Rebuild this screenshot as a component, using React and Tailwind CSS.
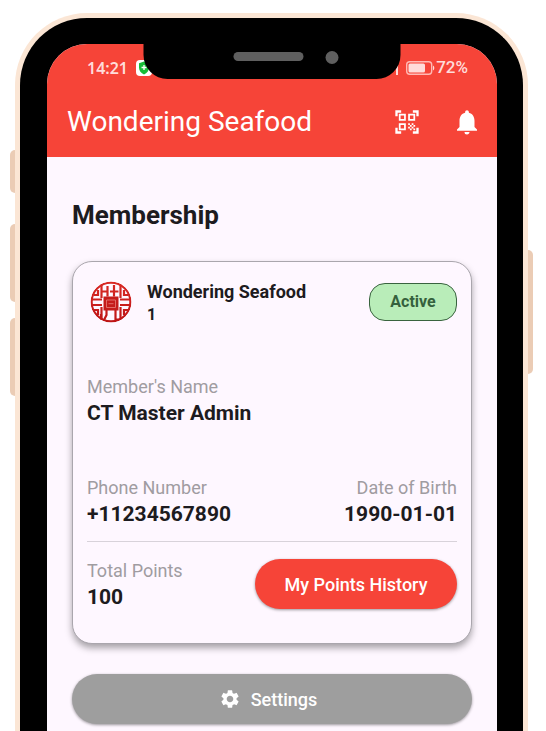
import React from "react";
import { MdNotifications, MdQrCodeScanner, MdSettings } from "react-icons/md";

function SealLogo() {
  return (
    <svg viewBox="0 0 42 42" className="h-[42px] w-[42px] shrink-0" role="img" aria-label="Wondering Seafood logo">
      <defs>
        <clipPath id="seal-disc">
          <circle cx="21" cy="21" r="20.5" />
        </clipPath>
        <linearGradient id="seal-red" x1="0" y1="0" x2="0" y2="42" gradientUnits="userSpaceOnUse">
          <stop offset="0" stopColor="#d92a25" />
          <stop offset="1" stopColor="#bd1415" />
        </linearGradient>
      </defs>
      <g clipPath="url(#seal-disc)" fill="none" stroke="url(#seal-red)" strokeWidth="2.2">
        <circle cx="21" cy="21" r="19.400" />
        <path d="M11.500 3v14M30.500 3v14M11.500 26v13M30.500 26v13" />
        <path d="M17.500 5v10.500M24 4v11.500M12 10.500h5M20 10.500h8.500" />
        <path d="M1 18.500h11M1 24h11M30 18.500h11M30 24h11" />
        <path d="M8 9v5H3.500M34 9v5h4.500" />
        <path d="M8 34v-5H3.500M34 34v-5h4.500" />
        <path d="M16.500 29v5l-2.500 5M25.500 29v9.500h4M11 33v6" />
      </g>
      <path fill="#c51b1b" d="M13.500 15.500h15v14h-15z" />
      <path d="M16.500 19h9v7.500h-9zM18.500 22.700h5" fill="none" stroke="#e8807b" strokeWidth=".8" />
    </svg>
  );
}

function StatusBar() {
  return (
    <div className="relative flex h-[47px] items-center justify-between pr-[29px] pl-10 font-['Noto_Sans','Open_Sans',sans-serif] text-base font-semibold text-[#ffdcda]">
      <div className="flex items-center gap-2">
        <span>14:21</span>
        <svg viewBox="0 0 16 16" className="h-4 w-4" aria-hidden="true">
          <rect width="16" height="16" rx="4" fill="#fff" />
          <path d="M8 1.500l5 1.800v4.500c0 3-2 5.200-5 6.700-3-1.500-5-3.700-5-6.700V3.300z" fill="#16bd38" />
          <path d="M8 5v5M5.500 7.500h5" stroke="#fff" strokeWidth="1.300" />
        </svg>
      </div>
      <div className="flex items-center gap-px">
        <svg viewBox="0 0 42 16" className="h-4 w-[42px]" aria-hidden="true">
          <path d="M3 15V5l2-2v12z" fill="#ffdcda" />
          <rect x="13.700" y="1.700" width="25" height="12.600" rx="3" fill="none" stroke="#ffb9b4" strokeWidth="1.400" />
          <rect x="15.500" y="3.500" width="16.500" height="9" rx="1.500" fill="#ffdcda" />
          <path d="M40 5.500a3 3 0 0 1 0 5z" fill="#ffdcda" />
        </svg>
        <span className="font-[Roboto,sans-serif] text-[17px] font-medium">72%</span>
      </div>
      <div className="absolute top-0 left-1/2 flex h-[35px] w-[257px] -translate-x-1/2 rounded-b-[24px] bg-black pt-[7px] pl-[90px]">
        <div className="mt-px h-[9px] w-[70px] rounded-full bg-[#5f5f5f]" />
        <div className="ml-[22px] h-[13px] w-[13px] rounded-full bg-[#5f5f5f]" />
      </div>
    </div>
  );
}

function Field({ label, value, className = "" }) {
  return (
    <dl className={className}>
      <dt className="text-[18px] leading-[27px] text-[#a09ca1]">{label}</dt>
      <dd className="text-[21px] leading-[27px] font-bold">{value}</dd>
    </dl>
  );
}

function MembershipCard() {
  return (
    <article className="mt-[29px] rounded-[20px] border border-[#aaa6ad] bg-[#fef7ff] px-[14px] pt-4 pb-8 shadow-[0_4px_7px_rgba(0,0,0,0.35)]">
      <div className="flex items-center">
        <div className="pl-[3px]">
          <SealLogo />
        </div>
        <div className="ml-[15px] flex-1 pt-[2px] font-bold">
          <h2 className="text-[18px] leading-6">Wondering Seafood</h2>
          <p className="text-base leading-[22px]">1</p>
        </div>
        <span className="flex h-[38px] w-[88px] items-center justify-center rounded-[16px] border border-[#39633f] bg-[#b9edb9] text-base font-bold text-[#35613d]">
          Active
        </span>
      </div>
      <Field label="Member's Name" value="CT Master Admin" className="mt-[47px]" />
      <div className="mt-[47px] flex justify-between border-b border-[#d8d2da] pb-[13px]">
        <Field label="Phone Number" value="+11234567890" />
        <Field label="Date of Birth" value="1990-01-01" className="text-right" />
      </div>
      <div className="mt-[15px] flex items-center justify-between">
        <Field label="Total Points" value="100" />
        <button type="button" className="h-[50px] w-[202px] rounded-full bg-[#f64438] text-[18px] font-medium text-white shadow-[0_1px_3px_rgba(0,0,0,0.4)]">
          My Points History
        </button>
      </div>
    </article>
  );
}

export default function App() {
  return (
    <div className="flex min-h-screen flex-col overflow-hidden bg-white pt-[13px] pr-[18px] pl-[15px] font-[Roboto,sans-serif] text-[#1d1b20]">
      <div className="relative flex flex-1 flex-col rounded-t-[72px] border-x-[5px] border-t-[5px] border-[#fbe6d5] bg-black pt-[26px] pr-[26px] pl-[27px]">
        <div className="absolute top-[132px] -left-[10px] h-[43px] w-[5px] rounded-l-[5px] bg-[#ebccb5]" />
        <div className="absolute top-[206px] -left-[10px] h-[78px] w-[5px] rounded-l-[5px] bg-[#ebccb5]" />
        <div className="absolute top-[300px] -left-[10px] h-[78px] w-[5px] rounded-l-[5px] bg-[#ebccb5]" />
        <div className="absolute top-[232px] -right-[10px] h-[124px] w-[5px] rounded-r-[5px] bg-[#ebccb5]" />
        <div className="flex flex-1 flex-col overflow-hidden rounded-t-[40px] bg-[#fef7ff]">
          <header className="bg-[#f64438] text-white">
            <StatusBar />
            <div className="flex h-[66px] items-center pr-[15px] pb-1 pl-5">
              <h1 className="flex-1 text-[28px]">Wondering Seafood</h1>
              <div className="flex items-center gap-[31px]">
                <button type="button" aria-label="Scan QR code">
                  <MdQrCodeScanner size={28} />
                </button>
                <button type="button" aria-label="Notifications">
                  <MdNotifications size={30} />
                </button>
              </div>
            </div>
          </header>
          <main className="px-[25px] pt-[41px] pb-[7px]">
            <h2 className="text-[26px] leading-[34px] font-bold">Membership</h2>
            <MembershipCard />
            <button type="button" className="mt-[30px] flex h-[50px] w-full items-center justify-center gap-[10px] rounded-full bg-[#9e9e9e] pr-2 text-[18px] font-medium text-white shadow-[0_1px_3px_rgba(0,0,0,0.4)]">
              <MdSettings size={22} />
              Settings
            </button>
          </main>
        </div>
      </div>
    </div>
  );
}
